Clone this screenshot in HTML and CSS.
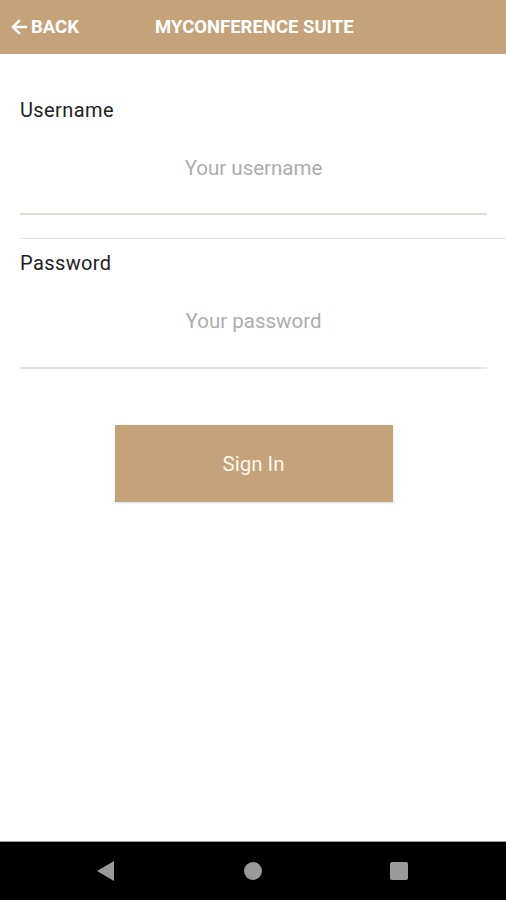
FILE: index.html
```html
<!DOCTYPE html>
<html lang="en">
<head>
  <meta charset="UTF-8">
  <title>MyConference Suite - Sign In</title>
  <link rel="stylesheet" href="styles.css">
</head>
<body>

  <div class="screen">
    <!-- Kopfzeile -->
    <div class="topbar">
      <a class="back" href="#">
        <svg width="18" height="16" viewBox="0 0 18 16">
          <path d="M16 8H3M9 2L3 8l6 6" fill="none" stroke="#fff" stroke-width="2.4" stroke-linecap="square"/>
        </svg>
        BACK
      </a>
      <div class="title">MYCONFERENCE SUITE</div>
    </div>

    <!-- Login-Formular -->
    <div class="form">
      <div class="field field-user">
        <label for="user">Username</label>
        <input type="text" id="user" placeholder="Your username">
      </div>
      <div class="divider"></div>
      <div class="field field-pass">
        <label for="pass">Password</label>
        <input type="password" id="pass" placeholder="Your password">
      </div>
      <div class="actions">
        <button class="signin">Sign In</button>
      </div>
    </div>

    <!-- Android-Navigationsleiste -->
    <div class="navbar">
      <svg class="nav-back" width="20" height="22" viewBox="0 0 20 22">
        <path d="M18 1v20L1 11z" fill="#9a9a9a"/>
      </svg>
      <span class="nav-home"></span>
      <span class="nav-recent"></span>
    </div>
  </div>

</body>
</html>
```

FILE: styles.css
```css
body {
  margin: 0;
  font-family: Roboto, "Noto Sans", Arial, sans-serif;
  background: #fff;
}
.screen {
  width: 506px;
  height: 900px;
  display: flex;
  flex-direction: column;
}
.topbar {
  height: 54px;
  background: #c4a27a;
  display: flex;
  align-items: center;
  color: #fff;
  font-weight: bold;
  font-size: 18.5px;
  flex-shrink: 0;
}
.back {
  display: flex;
  align-items: center;
  gap: 3px;
  color: #fff;
  text-decoration: none;
  padding-left: 10px;
  width: 145px;
}
.form {
  flex: 1;
  padding-top: 42px;
}
.field {
  padding-left: 20px;
  padding-right: 19px;
}
.field label {
  display: block;
  font-size: 20px;
  letter-spacing: 0.4px;
  color: #222;
  line-height: 28px;
}
.field input {
  display: block;
  width: 100%;
  box-sizing: border-box;
  border: none;
  border-bottom: 2px solid #e5ddd4;
  background: transparent;
  font-family: inherit;
  font-size: 20.5px;
  text-align: center;
  height: 91px;
  padding: 0 0 2px;
  outline: none;
  color: #333;
}
.field-pass input {
  height: 92px;
  border-bottom-color: #e3e3e3;
}
.field input::placeholder {
  color: #adadad;
}
.divider {
  height: 1px;
  background: #e6e6e6;
  margin: 23px 0 10px 20px;
}
.actions {
  display: flex;
  justify-content: center;
  padding-top: 56px;
  padding-left: 1px;
}
.signin {
  width: 278px;
  height: 77px;
  background: #c4a27a;
  color: #fbf6f0;
  border: none;
  font-family: inherit;
  font-size: 20.5px;
  box-shadow: 0 1px 2px rgba(0, 0, 0, 0.15);
  cursor: pointer;
}
.navbar {
  height: 58px;
  background: #000;
  border-top: 1px solid #9a9a9a;
  display: flex;
  align-items: center;
  justify-content: space-between;
  padding: 0 98px 0 96px;
  flex-shrink: 0;
}
.nav-home {
  width: 18px;
  height: 18px;
  border-radius: 50%;
  background: #9a9a9a;
}
.nav-recent {
  width: 18px;
  height: 18px;
  border-radius: 2px;
  background: #9a9a9a;
}
```
